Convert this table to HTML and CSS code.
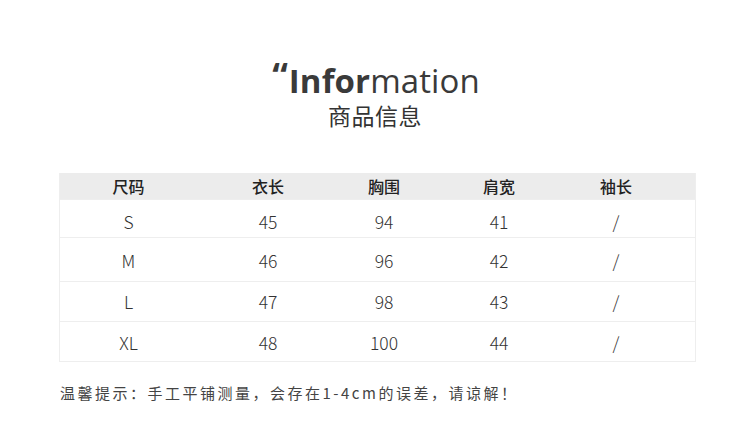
FILE: index.html
```html
<!DOCTYPE html>
<html lang="zh">
<head>
<meta charset="utf-8">
<link rel="stylesheet" href="styles.css">
</head>
<body>
<div class="page">
  <div class="title"><span class="quote">“</span><span class="bold">Infor</span>mation</div>
  <div class="subtitle">商品信息</div>
  <div class="table">
    <div class="row head">
      <div class="c">尺码</div><div class="c">衣长</div><div class="c">胸围</div><div class="c">肩宽</div><div class="c">袖长</div><div></div>
    </div>
    <div class="row r1">
      <div class="c">S</div><div class="c">45</div><div class="c">94</div><div class="c">41</div><div class="c">/</div><div></div>
    </div>
    <div class="row r2">
      <div class="c">M</div><div class="c">46</div><div class="c">96</div><div class="c">42</div><div class="c">/</div><div></div>
    </div>
    <div class="row r3">
      <div class="c">L</div><div class="c">47</div><div class="c">98</div><div class="c">43</div><div class="c">/</div><div></div>
    </div>
    <div class="row r4">
      <div class="c">XL</div><div class="c">48</div><div class="c">100</div><div class="c">44</div><div class="c">/</div><div></div>
    </div>
  </div>
  <div class="note">温馨提示：手工平铺测量，会存在1-4cm的误差，请谅解！</div>
</div>
</body>
</html>
```

FILE: styles.css
```css
html, body {
  margin: 0;
  padding: 0;
  background: #ffffff;
}
.page {
  width: 750px;
  height: 438px;
  padding-top: 54px;
  box-sizing: border-box;
  font-family: "Noto Sans CJK SC", "Noto Sans", sans-serif;
  color: #333;
}
.title {
  text-align: center;
  font-family: "Open Sans", "Noto Sans CJK SC", sans-serif;
  font-size: 33px;
  line-height: 44px;
  color: #3a3a3a;
  letter-spacing: 0.1px;
  padding-left: 2px;
}
.title .bold {
  font-weight: 700;
}
.title .quote {
  font-weight: 700;
  font-size: 35px;
  vertical-align: 4px;
  margin-right: 1px;
}
.subtitle {
  text-align: center;
  font-size: 23px;
  line-height: 30px;
  margin-top: -3px;
  color: #333;
  letter-spacing: 0.5px;
}
.table {
  margin: 43px 0 0 59px;
  width: 637px;
  box-sizing: border-box;
  border: 1px solid #eeeeee;
  border-top: none;
}
.row {
  display: grid;
  grid-template-columns: 137px 142px 90px 140px 94px 1fr;
  align-items: center;
  border-top: 1px solid #eeeeee;
}
.row .c {
  text-align: center;
}
.head {
  background: #ececec;
  height: 26px;
  font-weight: 500;
  font-size: 16px;
  color: #222;
  border-top: none;
}
.r1, .r2, .r3, .r4 {
  font-size: 17.5px;
  font-weight: 300;
  color: #333;
  box-sizing: border-box;
  font-variant-numeric: tabular-nums;
}
.r1 { height: 38px; padding-top: 5px; }
.r2 { height: 44px; padding-top: 1px; }
.r3 { height: 40px; }
.r4 { height: 40px; padding-top: 2px; }
.note {
  margin: 20px 0 0 60px;
  font-size: 15px;
  letter-spacing: 2.5px;
  color: #444;
  font-weight: 400;
}
```
